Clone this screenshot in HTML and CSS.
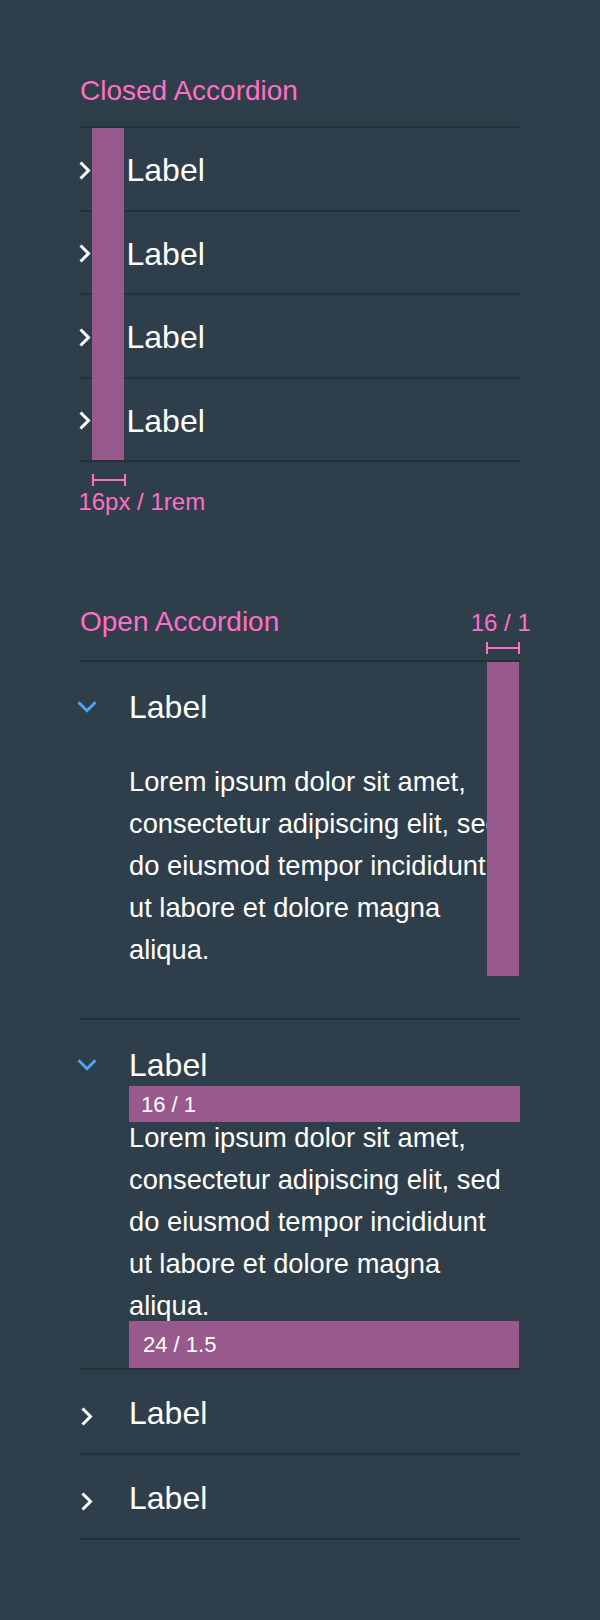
FILE: index.html
```html
<!DOCTYPE html>
<html lang="en">
<head>
<meta charset="utf-8">
<title>Accordion spacing</title>
<link rel="stylesheet" href="styles.css">
</head>
<body>
<main class="page">
  <section class="demo demo-closed">
    <h2 class="demo-title">Closed Accordion</h2>
    <div class="accordion">
      <div class="acc-item">
        <div class="acc-head">
          <span class="acc-icon"><svg class="chev-right" width="12" height="19" viewBox="0 0 12 19"><polyline points="1.5,1.5 9.5,9.5 1.5,17.5"/></svg></span>
          <span class="acc-label">Label</span>
        </div>
      </div>
      <div class="acc-item">
        <div class="acc-head">
          <span class="acc-icon"><svg class="chev-right" width="12" height="19" viewBox="0 0 12 19"><polyline points="1.5,1.5 9.5,9.5 1.5,17.5"/></svg></span>
          <span class="acc-label">Label</span>
        </div>
      </div>
      <div class="acc-item">
        <div class="acc-head">
          <span class="acc-icon"><svg class="chev-right" width="12" height="19" viewBox="0 0 12 19"><polyline points="1.5,1.5 9.5,9.5 1.5,17.5"/></svg></span>
          <span class="acc-label">Label</span>
        </div>
      </div>
      <div class="acc-item">
        <div class="acc-head">
          <span class="acc-icon"><svg class="chev-right" width="12" height="19" viewBox="0 0 12 19"><polyline points="1.5,1.5 9.5,9.5 1.5,17.5"/></svg></span>
          <span class="acc-label">Label</span>
        </div>
      </div>
      <div class="spacer-bar spacer-bar-left"></div>
    </div>
    <div class="measure-below">
      <span class="bracket"></span>
      <span class="measure-text">16px / 1rem</span>
    </div>
  </section>

  <section class="demo demo-open">
    <h2 class="demo-title">Open Accordion</h2>
    <div class="measure-right">
      <span class="measure-text">16 / 1</span>
      <span class="bracket"></span>
    </div>
    <div class="accordion">
      <div class="acc-item is-open item-first">
        <div class="acc-head">
          <span class="acc-icon"><svg class="chev-down" width="20" height="12" viewBox="0 0 20 12"><polyline points="1.5,1.2 10,9.7 18.5,1.2"/></svg></span>
          <span class="acc-label">Label</span>
        </div>
        <p class="acc-body">Lorem ipsum dolor sit amet, consectetur adipiscing elit, sed do eiusmod tempor incididunt ut labore et dolore magna aliqua.</p>
      </div>
      <div class="acc-item is-open item-annotated">
        <div class="acc-head">
          <span class="acc-icon"><svg class="chev-down" width="20" height="12" viewBox="0 0 20 12"><polyline points="1.5,1.2 10,9.7 18.5,1.2"/></svg></span>
          <span class="acc-label">Label</span>
        </div>
        <div class="spacer-box spacer-top">16 / 1</div>
        <p class="acc-body">Lorem ipsum dolor sit amet, consectetur adipiscing elit, sed do eiusmod tempor incididunt ut labore et dolore magna aliqua.</p>
        <div class="spacer-box spacer-bottom">24 / 1.5</div>
      </div>
      <div class="acc-item is-collapsed">
        <div class="acc-head">
          <span class="acc-icon"><svg class="chev-right" width="12" height="19" viewBox="0 0 12 19"><polyline points="1.5,1.5 9.5,9.5 1.5,17.5"/></svg></span>
          <span class="acc-label">Label</span>
        </div>
      </div>
      <div class="acc-item is-collapsed">
        <div class="acc-head">
          <span class="acc-icon"><svg class="chev-right" width="12" height="19" viewBox="0 0 12 19"><polyline points="1.5,1.5 9.5,9.5 1.5,17.5"/></svg></span>
          <span class="acc-label">Label</span>
        </div>
      </div>
      <div class="spacer-bar spacer-bar-right"></div>
    </div>
  </section>
</main>
</body>
</html>
```

FILE: styles.css
```css
* {
  box-sizing: border-box;
}

html,
body {
  margin: 0;
  padding: 0;
}

body {
  background: #2e3e4a;
  color: #ffffff;
  font-family: "Liberation Sans", Arial, Helvetica, sans-serif;
}

.page {
  width: 600px;
  min-height: 1620px;
  padding: 77px 0 0 79px;
}

.demo {
  position: relative;
  width: 441px;
}

.demo-title {
  margin: 0 0 0 1px;
  font-size: 28px;
  line-height: 28px;
  font-weight: 400;
  color: #ff6ec7;
}

.demo-closed .demo-title {
  margin-bottom: 21px;
}

.demo-open {
  margin-top: 94.3px;
}

.demo-open .demo-title {
  margin-bottom: 24px;
}

/* accordion */
.accordion {
  position: relative;
  border-bottom: 2px solid #23313b;
}

.acc-item {
  border-top: 2px solid #23313b;
  padding: 26px 0 23.5px;
}

.acc-head {
  display: flex;
  align-items: center;
  height: 32px;
}

.acc-icon {
  width: 20px;
  height: 32px;
  flex: none;
  display: flex;
  align-items: center;
  justify-content: center;
  margin-left: -4px;
}

.acc-label {
  margin-left: 31.5px;
  font-size: 32px;
  line-height: 32px;
  color: #ffffff;
}

.demo-open .acc-icon {
  margin-left: -2px;
}

.demo-open .acc-label {
  margin-left: 32px;
}

.demo-open .is-collapsed .acc-icon {
  padding-top: 6px;
}

.chev-right polyline {
  fill: none;
  stroke: #ffffff;
  stroke-width: 3;
  stroke-linejoin: miter;
}

.chev-down polyline {
  fill: none;
  stroke: #4ea5f4;
  stroke-width: 3;
  stroke-linejoin: miter;
}

.item-first {
  padding: 29px 0 46.7px;
}

.item-annotated {
  padding: 29px 0 0;
}

.is-collapsed {
  padding: 27.5px 0 23.5px;
}

.acc-body {
  margin: 38px 0 0 50px;
  width: 380px;
  font-size: 27.3px;
  line-height: 42px;
  color: #ffffff;
}

.item-annotated .acc-body {
  margin-top: -5px;
}

/* spacing annotations */
.spacer-box {
  position: relative;
  margin-left: 50px;
  background: #985a8d;
  color: #ffffff;
  font-size: 22px;
}

.spacer-top {
  margin-top: 5px;
  width: 391px;
  height: 36px;
  line-height: 36px;
  padding: 1px 0 0 12px;
}

.spacer-bottom {
  margin-top: -6px;
  width: 390px;
  height: 47px;
  line-height: 47px;
  padding-left: 14px;
}

.spacer-bar {
  position: absolute;
  top: 2px;
  width: 32px;
  background: #985a8d;
}

.spacer-bar-left {
  left: 13px;
  height: 332px;
}

.spacer-bar-right {
  left: 408.3px;
  height: 314px;
}

.bracket {
  position: relative;
  display: block;
  width: 34px;
  height: 12px;
  border-left: 2px solid #ff6ec7;
  border-right: 2px solid #ff6ec7;
}

.bracket::before {
  content: "";
  position: absolute;
  left: 0;
  right: 0;
  top: 5px;
  height: 2px;
  background: #ff6ec7;
}

.measure-text {
  display: block;
  font-size: 24px;
  line-height: 24px;
  color: #ff6ec7;
  white-space: nowrap;
}

.measure-below {
  margin-top: 12px;
}

.measure-below .bracket {
  margin-left: 13px;
}

.measure-below .measure-text {
  margin-top: 3.7px;
  margin-left: -0.6px;
}

.measure-right {
  position: absolute;
  top: 2.7px;
  left: 391.7px;
}

.measure-right .bracket {
  margin-top: 7px;
  margin-left: 15px;
}
```
